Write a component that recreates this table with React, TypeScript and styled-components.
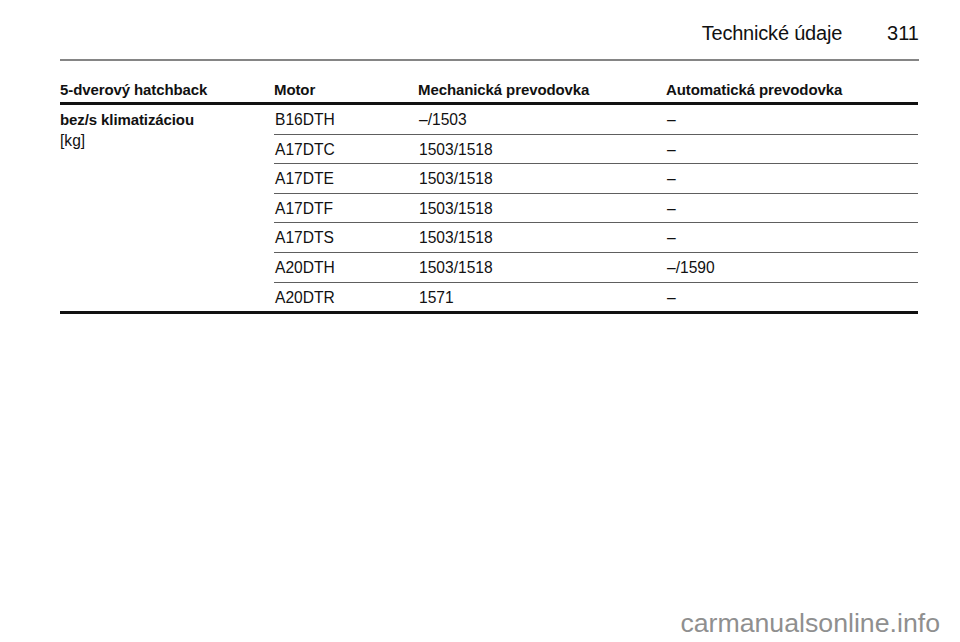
import styled, { createGlobalStyle } from 'styled-components';

type Row = {
  motor: string;
  manual: string;
  automatic: string;
};

const rows: Row[] = [
  { motor: 'B16DTH', manual: '–/1503', automatic: '–' },
  { motor: 'A17DTC', manual: '1503/1518', automatic: '–' },
  { motor: 'A17DTE', manual: '1503/1518', automatic: '–' },
  { motor: 'A17DTF', manual: '1503/1518', automatic: '–' },
  { motor: 'A17DTS', manual: '1503/1518', automatic: '–' },
  { motor: 'A20DTH', manual: '1503/1518', automatic: '–/1590' },
  { motor: 'A20DTR', manual: '1571', automatic: '–' },
];

const App = () => {
  return (
    <>
      <GlobalStyle />
      <Page>
        <Header>
          <Title>Technické údaje</Title>
          <PageNumber>311</PageNumber>
        </Header>
        <Rule />

        <Table>
          <colgroup>
            <col style={{ width: 214 }} />
            <col style={{ width: 144 }} />
            <col style={{ width: 248 }} />
            <col />
          </colgroup>
          <thead>
            <tr>
              <Th>5-dverový hatchback</Th>
              <Th>Motor</Th>
              <Th>Mechanická prevodovka</Th>
              <Th>Automatická prevodovka</Th>
            </tr>
          </thead>
          <tbody>
            {rows.map((row, i) => (
              <tr key={row.motor}>
                {i === 0 && (
                  <LabelCell rowSpan={rows.length}>
                    <LabelMain>bez/s klimatizáciou</LabelMain>
                    <LabelUnit>[kg]</LabelUnit>
                  </LabelCell>
                )}
                <Td $first={i === 0} $last={i === rows.length - 1}>{row.motor}</Td>
                <Td $first={i === 0} $last={i === rows.length - 1}>{row.manual}</Td>
                <Td $first={i === 0} $last={i === rows.length - 1}>{row.automatic}</Td>
              </tr>
            ))}
          </tbody>
        </Table>

        <Watermark>carmanualsonline.info</Watermark>
      </Page>
    </>
  );
};

const GlobalStyle = createGlobalStyle`
  html, body {
    margin: 0;
    padding: 0;
    background: #ffffff;
  }

  body {
    font-family: "Liberation Sans", Arial, sans-serif;
    color: #111111;
  }
`;

const Page = styled.div`
  width: 960px;
  height: 642px;
  overflow: hidden;
  display: flex;
  flex-direction: column;
  background: #ffffff;
`;

const Header = styled.div`
  display: flex;
  justify-content: flex-end;
  align-items: baseline;
  gap: 45px;
  padding: 22px 41px 0 60px;
  font-size: 20px;
  line-height: 22px;
  color: #111111;
`;

const Title = styled.span`
  letter-spacing: -0.2px;
`;

const PageNumber = styled.span``;

const Rule = styled.div`
  height: 2px;
  margin: 15px 41px 0 60px;
  background: #858585;
`;

const Table = styled.table`
  margin: 0 42px 0 60px;
  border-collapse: separate;
  border-spacing: 0;
  table-layout: fixed;
  width: 858px;
`;

const Th = styled.th`
  text-align: left;
  font-weight: bold;
  font-size: 15px;
  line-height: 18px;
  padding: 20px 0 3px 0;
  border-bottom: 3px solid #111111;
  white-space: nowrap;
  letter-spacing: -0.1px;
`;

const LabelCell = styled.td`
  vertical-align: top;
  font-size: 15px;
  line-height: 21px;
  padding: 4px 0 0 0;
  border-bottom: 3px solid #111111;
`;

const LabelMain = styled.div`
  font-weight: bold;
  letter-spacing: -0.1px;
`;

const LabelUnit = styled.div`
  font-size: 15.6px;
  font-weight: normal;
`;

const Td = styled.td<{ $first: boolean; $last: boolean }>`
  font-size: 15.6px;
  line-height: 18px;
  padding: 6px 0 4.6px 1px;
  border-top: ${({ $first }) => ($first ? 'none' : '1px solid #5e5e5e')};
  border-bottom: ${({ $last }) => ($last ? '3px solid #111111' : 'none')};
  white-space: nowrap;
`;

const Watermark = styled.div`
  margin-top: auto;
  align-self: flex-end;
  padding: 0 20px 6px 0;
  font-size: 26.7px;
  line-height: 26px;
  color: #8f8f8f;
`;

export default App;
